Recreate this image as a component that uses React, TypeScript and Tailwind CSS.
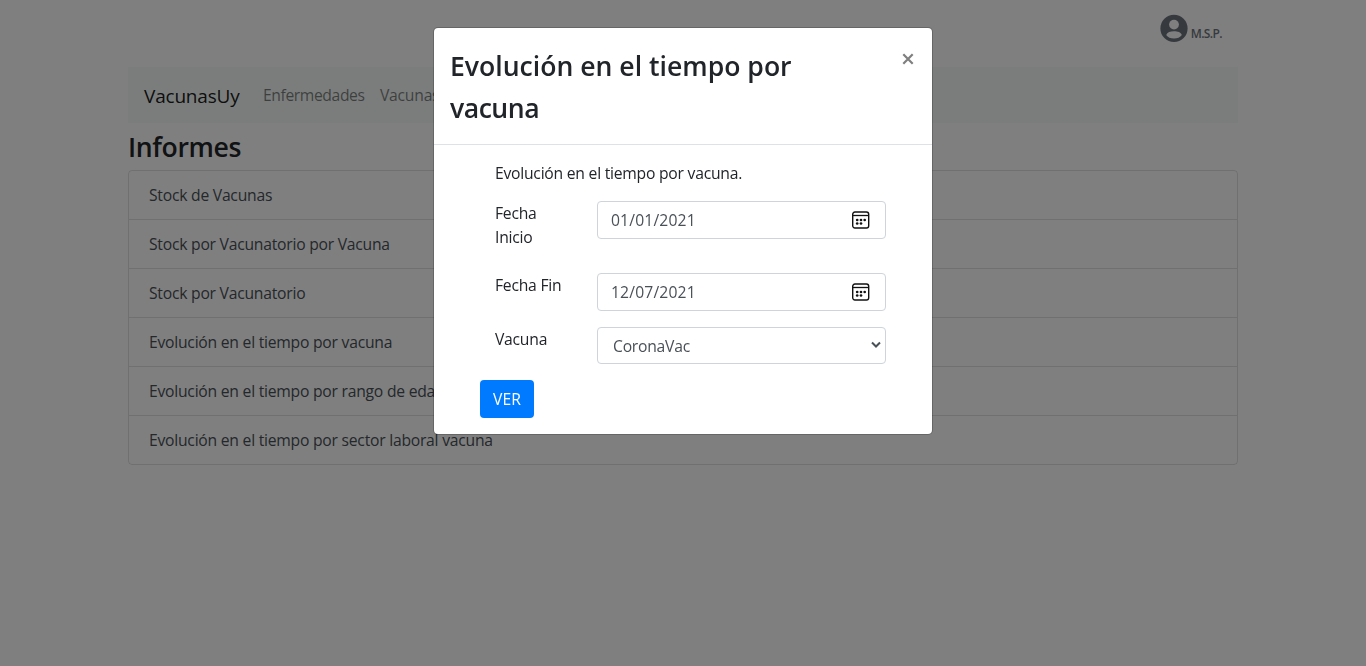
const reports = [
  'Stock de Vacunas',
  'Stock por Vacunatorio por Vacuna',
  'Stock por Vacunatorio',
  'Evolución en el tiempo por vacuna',
  'Evolución en el tiempo por rango de edad',
  'Evolución en el tiempo por sector laboral vacuna',
];

function UserIcon() {
  return (
    <svg viewBox="0 0 28 28" className="size-7" aria-hidden="true">
      <circle cx="14" cy="14.400" r="13.600" fill="#6c757d" />
      <circle cx="14" cy="10.600" r="4.900" fill="#fff" />
      <path d="M6.200 21C7.200 18.300 10.400 17.300 14 17.300s6.800 1 7.800 3.700C20.200 23.300 17.300 24.600 14 24.600s-6.200-1.300-7.800-3.600z" fill="#fff" />
    </svg>
  );
}

function CalendarIcon() {
  return (
    <svg viewBox="0 0 18 18" className="mb-px size-[18px]" aria-hidden="true">
      <rect x="0.700" y="1" width="16" height="16" rx="2.200" fill="none" stroke="#111" strokeWidth="1.400" />
      <path d="M1 4.500h16" stroke="#111" strokeWidth="1.300" />
      <g fill="#111">
        <circle cx="5.200" cy="9" r="1.350" />
        <circle cx="9" cy="9" r="1.350" />
        <circle cx="12.700" cy="9" r="1.350" />
        <circle cx="5.200" cy="12.500" r="1.350" />
        <circle cx="9" cy="12.500" r="1.350" />
      </g>
    </svg>
  );
}

function DateField({ value }: { value: string }) {
  return (
    <div className="flex h-[38px] w-[289px] items-center justify-between rounded border border-[#ced4da] pr-[15px] pl-[13px] text-[#495057]">
      <span className="tracking-[0.15px]">{value}</span>
      <CalendarIcon />
    </div>
  );
}

function Modal() {
  return (
    <div className="fixed inset-0 flex items-start justify-center bg-black/50 pt-[27px]">
      <div role="dialog" className="w-[500px] rounded-[5px] border border-black/20 bg-white bg-clip-padding">
        <div className="flex justify-between border-b border-[#dee2e6] px-4 pt-[17px] pb-[15px]">
          <h5 className="w-[400px] text-[26.6px] leading-[42px] font-semibold tracking-normal">
            Evolución en el tiempo por
            <br />
            <span className="tracking-[-0.5px]">vacuna</span>
          </h5>
          <button className="flex h-7 w-3.5 items-center text-[#7f7f7f]" aria-label="Cerrar">
            <svg viewBox="0 0 12 12" className="size-3" aria-hidden="true">
              <path d="M1.300 1.300l9.400 9.400M10.700 1.300l-9.400 9.400" stroke="currentColor" strokeWidth="2.200" />
            </svg>
          </button>
        </div>
        <div className="px-[46px] py-4">
          <p className="mb-4 pl-[15px]">Evolución en el tiempo por vacuna.</p>
          <div className="mb-6 flex items-start pl-[15px]">
            <label className="w-[102px] pr-[30px]">Fecha Inicio</label>
            <DateField value="01/01/2021" />
          </div>
          <div className="mb-4 flex items-start pl-[15px]">
            <label className="w-[102px]">Fecha Fin</label>
            <DateField value="12/07/2021" />
          </div>
          <div className="mb-4 flex items-start pl-[15px]">
            <label className="w-[102px]">Vacuna</label>
            <div className="flex h-[37px] w-[289px] items-center justify-between rounded border border-[#ced4da] pr-1 pl-[15px] text-[#495057]">
              <span>CoronaVac</span>
              <svg viewBox="0 0 10 8" className="mb-px h-2 w-2.5" aria-hidden="true">
                <path d="M1 1.500l4 4 4-4" fill="none" stroke="currentColor" strokeWidth="2" />
              </svg>
            </div>
          </div>
          <button className="block h-[38px] w-[54px] rounded bg-[#007bff] text-white tracking-[0.1px]">VER</button>
        </div>
      </div>
    </div>
  );
}

export default function App() {
  return (
    <div className="min-h-screen bg-white font-['Open_Sans','Noto_Sans',sans-serif] text-[15.7px] leading-6 font-normal tracking-[-0.24px] text-[#212529]">
      <div className="mx-auto w-[1110px]">
        <header className="flex h-[67px] items-start justify-end gap-[3px] pt-3.5 pr-4">
          <UserIcon />
          <span className="pt-2 text-[12px] leading-6 font-semibold tracking-[-0.6px] text-[#6c757d]">M.S.P.</span>
        </header>
        <nav className="flex h-14 items-center bg-[#f4faf8] px-4">
          <a className="w-[119px] pt-0.5 text-[19px] tracking-[-0.2px] text-black/90">VacunasUy</a>
          <a className="w-[117px] tracking-[-0.4px] text-black/50">Enfermedades</a>
          <a className="text-black/50">Vacunas</a>
        </nav>
        <h3 className="mb-1 pt-[5px] text-[26.6px] leading-[38px] font-semibold tracking-[-0.35px]">Informes</h3>
        <ul className="divide-y divide-black/12 rounded border border-black/12 text-[#495057]">
          {reports.map((report) => (
            <li key={report} className="flex h-[49px] items-center px-5 last:h-12">
              {report}
            </li>
          ))}
        </ul>
      </div>
      <Modal />
    </div>
  );
}
